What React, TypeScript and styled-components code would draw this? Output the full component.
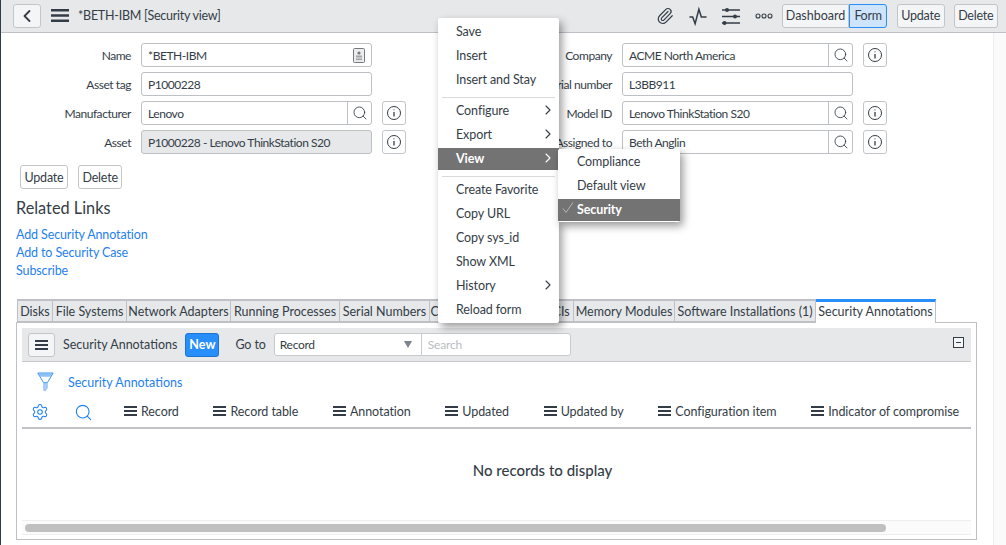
import React from "react";
import styled, { createGlobalStyle } from "styled-components";
import { Search, Settings, ChevronRight, ChevronLeft, Paperclip } from "lucide-react";

const GlobalStyle = createGlobalStyle`
  html, body {
    margin: 0;
    padding: 0;
    background: #fff;
    overflow: hidden;
  }
  * {
    box-sizing: border-box;
  }
  body {
    font-family: Lato, "Noto Sans", "Liberation Sans", sans-serif;
    font-size: 13px;
    color: #343d47;
  }
`;

const Page = styled.div`
  position: relative;
  width: 1006px;
  height: 545px;
  overflow: hidden;
  border-left: 1px solid #2e3d49;
  display: flex;
  flex-direction: column;
`;

const Header = styled.header`
  height: 33px;
  flex: none;
  display: flex;
  align-items: center;
  background: #e6e8ea;
  border-bottom: 1px solid #bdc0c4;
  padding: 0 8px 1px 12px;
`;

const BackButton = styled.button`
  width: 28px;
  height: 24px;
  padding: 0;
  display: flex;
  align-items: center;
  justify-content: center;
  background: #f4f5f6;
  border: 1px solid #c2c5c9;
  border-radius: 3px;
  color: #343d47;
`;

const MenuGlyph = styled.span`
  display: flex;
  margin-left: 10px;
`;

const HeaderTitle = styled.div`
  margin-left: 9px;
  font-size: 12.5px;
  letter-spacing: -0.25px;
  white-space: nowrap;
`;

const Spacer = styled.div`
  flex: 1;
`;

const HeaderIcon = styled.span`
  width: 18px;
  height: 20px;
  margin-right: 15px;
  display: flex;
  align-items: center;
  justify-content: center;
  color: #343d47;
`;

const SegGroup = styled.div`
  display: flex;
  margin-left: -6px;
  margin-right: 10px;
`;

const Seg = styled.button<{ $active?: boolean }>`
  height: 24px;
  padding: 0 ${({ $active }) => ($active ? "4px" : "3px")};
  font-family: inherit;
  font-size: 12.5px;
  letter-spacing: ${({ $active }) => ($active ? "-0.3px" : "0")};
  color: #343d47;
  background: ${({ $active }) => ($active ? "#cde4fb" : "#f4f5f6")};
  border: 1px solid ${({ $active }) => ($active ? "#278efc" : "#c2c5c9")};
  border-radius: ${({ $active }) => ($active ? "0 3px 3px 0" : "3px 0 0 3px")};
`;

const Button = styled.button<{ $inHeader?: boolean }>`
  height: 24px;
  padding: 0 3.5px;
  font-family: inherit;
  font-size: 12.5px;
  letter-spacing: -0.2px;
  color: #343d47;
  background: ${({ $inHeader }) => ($inHeader ? "#f4f5f6" : "#fff")};
  border: 1px solid #c2c5c9;
  border-radius: 3px;
  white-space: nowrap;
`;

const HeaderActions = styled.div`
  display: flex;
  gap: 9px;
`;

const Body = styled.div`
  flex: 1;
  display: flex;
  min-height: 0;
`;

const Main = styled.main`
  width: 992px;
  flex: none;
  display: flex;
  flex-direction: column;
`;

const Gutter = styled.div`
  flex: 1;
  background: #fafafa;
  border-left: 1px solid #eeeeee;
`;

const Form = styled.div`
  display: flex;
  gap: 76px;
  padding-top: 10px;
`;

const FormColumn = styled.div`
  display: flex;
  flex-direction: column;
  gap: 5px;
`;

const FormRow = styled.div`
  display: grid;
  grid-template-columns: 130px 231px 24px;
  column-gap: 10px;
  height: 24px;
  align-items: center;
`;

const Label = styled.label`
  padding-top: 1px;
  text-align: right;
  white-space: nowrap;
  font-size: 12px;
  letter-spacing: -0.45px;
`;

const FieldValue = styled.span`
  padding-top: 1px;
  font-size: 12px;
  letter-spacing: -0.45px;
`;

const Field = styled.div<{ $readOnly?: boolean }>`
  height: 24px;
  display: flex;
  align-items: center;
  justify-content: space-between;
  padding-left: 6px;
  background: ${({ $readOnly }) => ($readOnly ? "#e6e8ea" : "#fff")};
  border: 1px solid #bdc0c4;
  border-radius: 3px;
  overflow: hidden;
  white-space: nowrap;
`;

const LookupButton = styled.span`
  width: 24px;
  height: 22px;
  flex: none;
  display: flex;
  align-items: center;
  justify-content: center;
  border-left: 1px solid #bdc0c4;
  color: #343d47;
`;

const FieldIcon = styled.span`
  width: 24px;
  display: flex;
  align-items: center;
  justify-content: center;
`;

const InfoButton = styled.span`
  width: 24px;
  height: 24px;
  display: flex;
  align-items: center;
  justify-content: center;
  border: 1px solid #c2c5c9;
  border-radius: 3px;
`;

const FormButtons = styled.div`
  display: flex;
  gap: 10px;
  margin: 11px 0 0 19px;
`;

const RelatedTitle = styled.h2`
  margin: 9px 0 0 15px;
  height: 20px;
  line-height: 20px;
  font-size: 16.3px;
  font-weight: 400;
`;

const RelatedList = styled.div`
  display: flex;
  flex-direction: column;
  margin: 8px 0 0 15px;
`;

const RelatedLink = styled.a`
  height: 18px;
  line-height: 18px;
  font-size: 12.5px;
  letter-spacing: -0.12px;
  color: #1f80f0;
`;

const Tabs = styled.div`
  display: flex;
  margin: 19px 0 0 16px;
  height: 23px;
  position: relative;
  z-index: 1;
`;

const Tab = styled.div<{ $active?: boolean; $width: number }>`
  width: ${({ $width }) => $width}px;
  height: ${({ $active }) => ($active ? "24px" : "23px")};
  line-height: ${({ $active }) => ($active ? "20px" : "22px")};
  text-align: center;
  font-size: 12.5px;
  white-space: nowrap;
  overflow: hidden;
  background: ${({ $active }) => ($active ? "#fff" : "#e6e8ea")};
  border-top: ${({ $active }) => ($active ? "3px solid #278efc" : "2px solid #bdc0c4")};
  border-right: 1px solid #bdc0c4;
  border-bottom: ${({ $active }) => ($active ? "none" : "1px solid #bdc0c4")};
  &:first-child {
    border-left: 1px solid #bdc0c4;
  }
`;

const Panel = styled.section`
  margin-left: 15px;
  width: 961px;
  height: 218px;
  border: 1px solid #bdc0c4;
  padding: 5px 5px 0;
  display: flex;
  flex-direction: column;
`;

const ListBar = styled.div`
  height: 34px;
  flex: none;
  display: flex;
  align-items: center;
  background: #e6e8ea;
  border-bottom: 1px solid #c8cacd;
  padding: 0 8px 0 6px;
`;

const ListMenuButton = styled.span`
  width: 27px;
  height: 24px;
  display: flex;
  align-items: center;
  justify-content: center;
  background: #f4f5f6;
  border: 1px solid #c2c5c9;
  border-radius: 3px;
`;

const ListTitle = styled.span`
  margin-left: 8px;
  font-size: 12.5px;
  white-space: nowrap;
`;

const NewButton = styled.span`
  margin-left: 8px;
  width: 34px;
  height: 24px;
  display: flex;
  align-items: center;
  justify-content: center;
  color: #fff;
  font-weight: 700;
  font-size: 12.5px;
  background: #278efc;
  border: 1px solid #1f74d0;
  border-radius: 3px;
`;

const GoTo = styled.span`
  margin-left: 16px;
  margin-right: 8px;
  font-size: 12.5px;
  letter-spacing: -0.1px;
`;

const SelectBox = styled.div`
  width: 148px;
  height: 23px;
  display: flex;
  align-items: center;
  justify-content: space-between;
  padding: 0 9px 0 5px;
  font-size: 12px;
  letter-spacing: -0.3px;
  background: #fff;
  border: 1px solid #c8cacd;
  border-radius: 3px 0 0 3px;
`;

const Caret = styled.span`
  width: 0;
  height: 0;
  border-left: 4px solid transparent;
  border-right: 4px solid transparent;
  border-top: 7px solid #7d838a;
`;

const SearchBox = styled.div`
  width: 150px;
  height: 23px;
  margin-left: -1px;
  display: flex;
  align-items: center;
  padding-left: 6px;
  color: #b9bcc0;
  font-size: 12px;
  letter-spacing: -0.2px;
  background: #fff;
  border: 1px solid #c8cacd;
  border-radius: 0 3px 3px 0;
`;

const Collapse = styled.span`
  width: 11px;
  height: 11px;
  margin-top: -4px;
  margin-right: -1px;
  display: flex;
  align-items: center;
  justify-content: center;
  background: #f4f5f6;
  border: 1px solid #343d47;
  &::before {
    content: "";
    width: 5px;
    height: 1px;
    background: #343d47;
  }
`;

const FilterRow = styled.div`
  display: flex;
  align-items: center;
  gap: 14px;
  height: 20px;
  margin: 10px 0 0 15px;
`;

const FilterLink = styled.a`
  font-size: 12.5px;
  color: #1f80f0;
  white-space: nowrap;
`;

const ColumnHeaders = styled.div`
  height: 27px;
  margin-top: 10px;
  display: flex;
  align-items: flex-start;
  border-bottom: 2px solid #c0c2c6;
  padding-left: 9px;
`;

const HeaderTool = styled.span<{ $gap: number }>`
  display: flex;
  margin-right: ${({ $gap }) => $gap}px;
  color: #1f80f0;
  padding-top: 1px;
`;

const ColumnList = styled.div`
  display: flex;
  gap: 34.7px;
`;

const ColumnHead = styled.div`
  display: flex;
  align-items: center;
  gap: 4px;
  height: 18px;
  font-size: 12.5px;
  letter-spacing: -0.08px;
  white-space: nowrap;
`;

const Bars = styled.span`
  width: 13px;
  height: 10px;
  flex: none;
  border-top: 2px solid #343d47;
  border-bottom: 2px solid #343d47;
  position: relative;
  &::before {
    content: "";
    position: absolute;
    left: 0;
    right: 0;
    top: 2px;
    height: 2px;
    background: #343d47;
  }
`;

const Empty = styled.div`
  height: 91px;
  display: flex;
  align-items: center;
  justify-content: center;
  padding: 0 0 10px 92px;
  font-size: 15px;
  font-weight: 500;
`;

const ScrollTrack = styled.div`
  height: 15px;
  display: flex;
  align-items: center;
  padding: 0 3px;
  background: #fbfbfb;
  border-top: 1px solid #eeeeee;
  border-bottom: 1px solid #eeeeee;
`;

const ScrollThumb = styled.div`
  width: 861px;
  height: 8px;
  background: #c0c0c0;
  border-radius: 4px;
`;

const Menu = styled.div<{ $sub?: boolean }>`
  position: absolute;
  z-index: 5;
  left: ${({ $sub }) => ($sub ? "557px" : "437px")};
  top: ${({ $sub }) => ($sub ? "149px" : "18px")};
  width: ${({ $sub }) => ($sub ? "122px" : "121px")};
  padding: ${({ $sub }) => ($sub ? "0 0 1px" : "1px 0 2px")};
  background: #fff;
  border-radius: 2px;
  box-shadow: 3px 4px 8px rgba(0, 0, 0, 0.4);
`;

const MenuItem = styled.div<{ $selected?: boolean; $indent?: number }>`
  height: ${({ $selected }) => ($selected ? "22px" : "24px")};
  margin-top: ${({ $selected }) => ($selected ? "2px" : "0")};
  display: flex;
  align-items: center;
  justify-content: space-between;
  padding: 0 3px ${({ $selected }) => ($selected ? "2px" : "0")} ${({ $indent }) => $indent ?? 18}px;
  font-size: 12.5px;
  letter-spacing: -0.1px;
  white-space: nowrap;
  color: ${({ $selected }) => ($selected ? "#fff" : "#343d47")};
  background: ${({ $selected }) => ($selected ? "#737373" : "transparent")};
  font-weight: ${({ $selected }) => ($selected ? 700 : 400)};
`;

const Separator = styled.div`
  height: 1px;
  margin: 6px 4px 0;
  background: #d8dadd;
`;

const CheckMark = styled.svg`
  position: absolute;
  left: 4px;
  top: 53px;
`;

function HamburgerIcon({ w, h, sw }: { w: number; h: number; sw: number }) {
  const mid = h / 2;
  return (
    <svg width={w} height={h} viewBox={`0 0 ${w} ${h}`}>
      <path
        d={`M0 ${sw / 2}H${w}M0 ${mid}H${w}M0 ${h - sw / 2}H${w}`}
        stroke="#343d47"
        strokeWidth={sw}
      />
    </svg>
  );
}

function InfoIcon() {
  return (
    <svg width="16" height="16" viewBox="0 0 16 16" fill="none" stroke="#343d47">
      <circle cx="8" cy="8" r="6.5" />
      <path d="M8 7v4.5" strokeWidth="1.3" />
      <circle cx="8" cy="4.8" r="0.6" fill="#343d47" stroke="none" />
    </svg>
  );
}

function PersonCard() {
  return (
    <svg width="12" height="15" viewBox="0 0 12 15">
      <rect x="0.5" y="0.5" width="11" height="14" rx="1" fill="#eceded" stroke="#77797c" />
      <circle cx="6" cy="5" r="1.6" fill="#77797c" />
      <rect x="3" y="7.5" width="6" height="2" fill="#a2a4a7" />
      <rect x="3" y="10.5" width="6" height="1.6" fill="#a2a4a7" />
    </svg>
  );
}

function PulseIcon() {
  return (
    <svg width="20" height="20" viewBox="0 0 20 20" fill="none" stroke="#343d47" strokeWidth="1.7">
      <path d="M0.5 11h3.6l2.7 7.5 4.2-16 2.7 8.5H19.5" />
    </svg>
  );
}

function SlidersIcon() {
  return (
    <svg width="18" height="18" viewBox="0 0 18 18" stroke="#343d47" fill="#343d47">
      <path d="M0 3h18M0 9.5h18M0 16h18" strokeWidth="1.4" />
      <circle cx="5" cy="3" r="2" stroke="none" />
      <circle cx="13" cy="9.5" r="2" stroke="none" />
      <circle cx="2.5" cy="16" r="2" stroke="none" />
    </svg>
  );
}

function DotsIcon() {
  return (
    <svg width="18" height="6" viewBox="0 0 18 6" fill="none" stroke="#343d47" strokeWidth="1.1">
      <circle cx="3" cy="3" r="2" />
      <circle cx="9" cy="3" r="2" />
      <circle cx="15" cy="3" r="2" />
    </svg>
  );
}

function FunnelIcon() {
  return (
    <svg width="17" height="20" viewBox="0 0 17 20" fill="none" stroke="#3f92f2" strokeWidth="1">
      <path d="M1.5 1.5h14l-2.2 3.2H3.7z" fill="#8cc0f7" stroke="none" />
      <path d="M0.8 1h15.4L10.5 10.5H6.5z" />
      <path d="M6.8 11h3.4v5l-1.7 2.5H6.8z" fill="#a7cff9" stroke="#8cc0f7" />
    </svg>
  );
}

const formLeft = [
  { label: "Name", value: "*BETH-IBM", kind: "card" },
  { label: "Asset tag", value: "P1000228", kind: "plain" },
  { label: "Manufacturer", value: "Lenovo", kind: "lookup" },
  { label: "Asset", value: "P1000228 - Lenovo ThinkStation S20", kind: "readonly" },
];

const formRight = [
  { label: "Company", value: "ACME North America", kind: "lookup" },
  { label: "Serial number", value: "L3BB911", kind: "plain" },
  { label: "Model ID", value: "Lenovo ThinkStation S20", kind: "lookup" },
  { label: "Assigned to", value: "Beth Anglin", kind: "lookup" },
];

const tabs = [
  { name: "Disks", width: 36 },
  { name: "File Systems", width: 74 },
  { name: "Network Adapters", width: 104 },
  { name: "Running Processes", width: 109 },
  { name: "Serial Numbers", width: 90 },
  { name: "Consumables", width: 75 },
  { name: "Related CIs", width: 69 },
  { name: "Memory Modules", width: 101 },
  { name: "Software Installations (1)", width: 141 },
];

const columns = [
  "Record",
  "Record table",
  "Annotation",
  "Updated",
  "Updated by",
  "Configuration item",
  "Indicator of compromise",
];

function FormFields({ rows }: { rows: typeof formLeft }) {
  return (
    <FormColumn>
      {rows.map((row) => (
        <FormRow key={row.label}>
          <Label>{row.label}</Label>
          <Field $readOnly={row.kind === "readonly"}>
            <FieldValue>{row.value}</FieldValue>
            {row.kind === "card" && (
              <FieldIcon>
                <PersonCard />
              </FieldIcon>
            )}
            {row.kind === "lookup" && (
              <LookupButton>
                <Search size={16} strokeWidth={1.3} />
              </LookupButton>
            )}
          </Field>
          {(row.kind === "lookup" || row.kind === "readonly") && (
            <InfoButton>
              <InfoIcon />
            </InfoButton>
          )}
        </FormRow>
      ))}
    </FormColumn>
  );
}

export default function App() {
  return (
    <Page>
      <GlobalStyle />
      <Header>
        <BackButton>
          <ChevronLeft size={20} strokeWidth={2.2} />
        </BackButton>
        <MenuGlyph>
          <HamburgerIcon w={18} h={13} sw={2.6} />
        </MenuGlyph>
        <HeaderTitle>*BETH-IBM [Security view]</HeaderTitle>
        <Spacer />
        <HeaderIcon>
          <Paperclip size={20} strokeWidth={1.6} />
        </HeaderIcon>
        <HeaderIcon>
          <PulseIcon />
        </HeaderIcon>
        <HeaderIcon>
          <SlidersIcon />
        </HeaderIcon>
        <HeaderIcon>
          <DotsIcon />
        </HeaderIcon>
        <SegGroup>
          <Seg>Dashboard</Seg>
          <Seg $active>Form</Seg>
        </SegGroup>
        <HeaderActions>
          <Button $inHeader>Update</Button>
          <Button $inHeader>Delete</Button>
        </HeaderActions>
      </Header>
      <Body>
        <Main>
          <Form>
            <FormFields rows={formLeft} />
            <FormFields rows={formRight} />
          </Form>
          <FormButtons>
            <Button>Update</Button>
            <Button>Delete</Button>
          </FormButtons>
          <RelatedTitle>Related Links</RelatedTitle>
          <RelatedList>
            <RelatedLink>Add Security Annotation</RelatedLink>
            <RelatedLink>Add to Security Case</RelatedLink>
            <RelatedLink>Subscribe</RelatedLink>
          </RelatedList>
          <Tabs>
            {tabs.map((tab) => (
              <Tab key={tab.name} $width={tab.width}>
                {tab.name}
              </Tab>
            ))}
            <Tab $active $width={120}>
              Security Annotations
            </Tab>
          </Tabs>
          <Panel>
            <ListBar>
              <ListMenuButton>
                <HamburgerIcon w={13} h={10} sw={2} />
              </ListMenuButton>
              <ListTitle>Security Annotations</ListTitle>
              <NewButton>New</NewButton>
              <GoTo>Go to</GoTo>
              <SelectBox>
                Record
                <Caret />
              </SelectBox>
              <SearchBox>Search</SearchBox>
              <Spacer />
              <Collapse />
            </ListBar>
            <FilterRow>
              <FunnelIcon />
              <FilterLink>Security Annotations</FilterLink>
            </FilterRow>
            <ColumnHeaders>
              <HeaderTool $gap={25}>
                <Settings size={18} strokeWidth={1.4} />
              </HeaderTool>
              <HeaderTool $gap={31}>
                <Search size={19} strokeWidth={1.4} />
              </HeaderTool>
              <ColumnList>
                {columns.map((col) => (
                  <ColumnHead key={col}>
                    <Bars />
                    {col}
                  </ColumnHead>
                ))}
              </ColumnList>
            </ColumnHeaders>
            <Empty>No records to display</Empty>
            <ScrollTrack>
              <ScrollThumb />
            </ScrollTrack>
          </Panel>
        </Main>
        <Gutter />
      </Body>
      <Menu>
        <MenuItem>Save</MenuItem>
        <MenuItem>Insert</MenuItem>
        <MenuItem>Insert and Stay</MenuItem>
        <Separator />
        <MenuItem>
          Configure
          <ChevronRight size={16} strokeWidth={1.6} />
        </MenuItem>
        <MenuItem>
          Export
          <ChevronRight size={16} strokeWidth={1.6} />
        </MenuItem>
        <MenuItem $selected>
          View
          <ChevronRight size={16} strokeWidth={1.6} />
        </MenuItem>
        <Separator />
        <MenuItem>Create Favorite</MenuItem>
        <MenuItem>Copy URL</MenuItem>
        <MenuItem>Copy sys_id</MenuItem>
        <MenuItem>Show XML</MenuItem>
        <MenuItem>
          History
          <ChevronRight size={16} strokeWidth={1.6} />
        </MenuItem>
        <MenuItem>Reload form</MenuItem>
      </Menu>
      <Menu $sub>
        <MenuItem $indent={19}>Compliance</MenuItem>
        <MenuItem $indent={19}>Default view</MenuItem>
        <MenuItem $selected $indent={19}>
          Security
        </MenuItem>
        <CheckMark width="12" height="12" viewBox="0 0 12 12" fill="none" stroke="#b5b5b5">
          <path d="M1 6.5l3 4 7-10" />
        </CheckMark>
      </Menu>
    </Page>
  );
}
